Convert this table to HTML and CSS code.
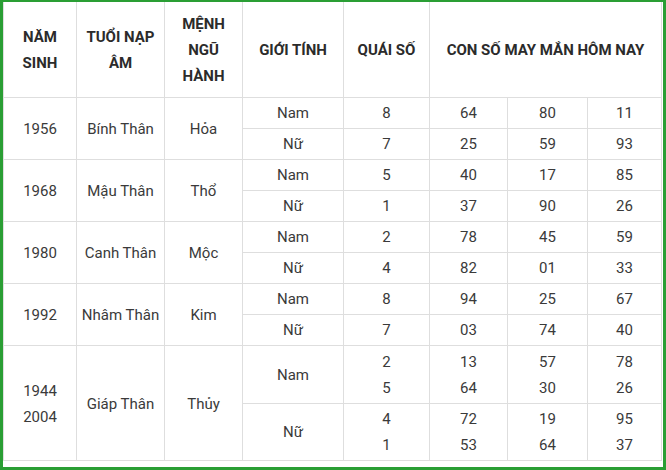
FILE: index.html
```html
<!DOCTYPE html>
<html lang="vi">
<head>
<meta charset="utf-8">
<link rel="stylesheet" href="styles.css">
</head>
<body>
<div class="frame">
<table class="tbl">
<colgroup>
<col class="c1"><col class="c2"><col class="c3"><col class="c4"><col class="c5"><col class="c6"><col class="c7"><col class="c8">
</colgroup>
<thead>
<tr>
<th>NĂM<br>SINH</th>
<th>TUỔI NẠP<br>ÂM</th>
<th>MỆNH<br>NGŨ<br>HÀNH</th>
<th>GIỚI TÍNH</th>
<th>QUÁI SỐ</th>
<th colspan="3">CON SỐ MAY MẮN HÔM NAY</th>
</tr>
</thead>
<tbody>
<tr><td rowspan="2">1956</td><td rowspan="2">Bính Thân</td><td rowspan="2">Hỏa</td><td>Nam</td><td>8</td><td>64</td><td>80</td><td>11</td></tr>
<tr><td>Nữ</td><td>7</td><td>25</td><td>59</td><td>93</td></tr>
<tr><td rowspan="2">1968</td><td rowspan="2">Mậu Thân</td><td rowspan="2">Thổ</td><td>Nam</td><td>5</td><td>40</td><td>17</td><td>85</td></tr>
<tr><td>Nữ</td><td>1</td><td>37</td><td>90</td><td>26</td></tr>
<tr><td rowspan="2">1980</td><td rowspan="2">Canh Thân</td><td rowspan="2">Mộc</td><td>Nam</td><td>2</td><td>78</td><td>45</td><td>59</td></tr>
<tr><td>Nữ</td><td>4</td><td>82</td><td>01</td><td>33</td></tr>
<tr><td rowspan="2">1992</td><td rowspan="2">Nhâm Thân</td><td rowspan="2">Kim</td><td>Nam</td><td>8</td><td>94</td><td>25</td><td>67</td></tr>
<tr><td>Nữ</td><td>7</td><td>03</td><td>74</td><td>40</td></tr>
<tr><td rowspan="2">1944<br>2004</td><td rowspan="2">Giáp Thân</td><td rowspan="2">Thủy</td><td>Nam</td><td>2<br>5</td><td>13<br>64</td><td>57<br>30</td><td>78<br>26</td></tr>
<tr><td>Nữ</td><td>4<br>1</td><td>72<br>53</td><td>19<br>64</td><td>95<br>37</td></tr>
</tbody>
</table>
</div>
</body>
</html>
```
FILE: styles.css
```css
html, body {
  margin: 0;
  padding: 0;
  background: #fff;
}
.frame {
  box-sizing: border-box;
  width: 666px;
  height: 470px;
  border: 3px solid #2a9e34;
  border-top-width: 2px;
  padding: 0 1px 7px 0;
  overflow: hidden;
}
.tbl {
  width: 659px;
  border-collapse: collapse;
  table-layout: fixed;
  font-family: Roboto, "Liberation Sans", sans-serif;
  font-size: 15px;
  color: #3a3a3a;
}
.c1 { width: 73px; }
.c2 { width: 88px; }
.c3 { width: 78px; }
.c4 { width: 101px; }
.c5 { width: 86px; }
.c6 { width: 78px; }
.c7 { width: 80px; }
.c8 { width: 74px; }
.tbl th, .tbl td {
  border: 1px solid #dedede;
  text-align: center;
  vertical-align: middle;
  line-height: 26px;
  padding: 2px 0;
}
.tbl th {
  border-top: 0;
  font-weight: 700;
  color: #2b2b2b;
  padding: 9px 0 8px;
}
.tbl tbody tr:nth-child(9) td {
  padding-top: 3px;
}
```
